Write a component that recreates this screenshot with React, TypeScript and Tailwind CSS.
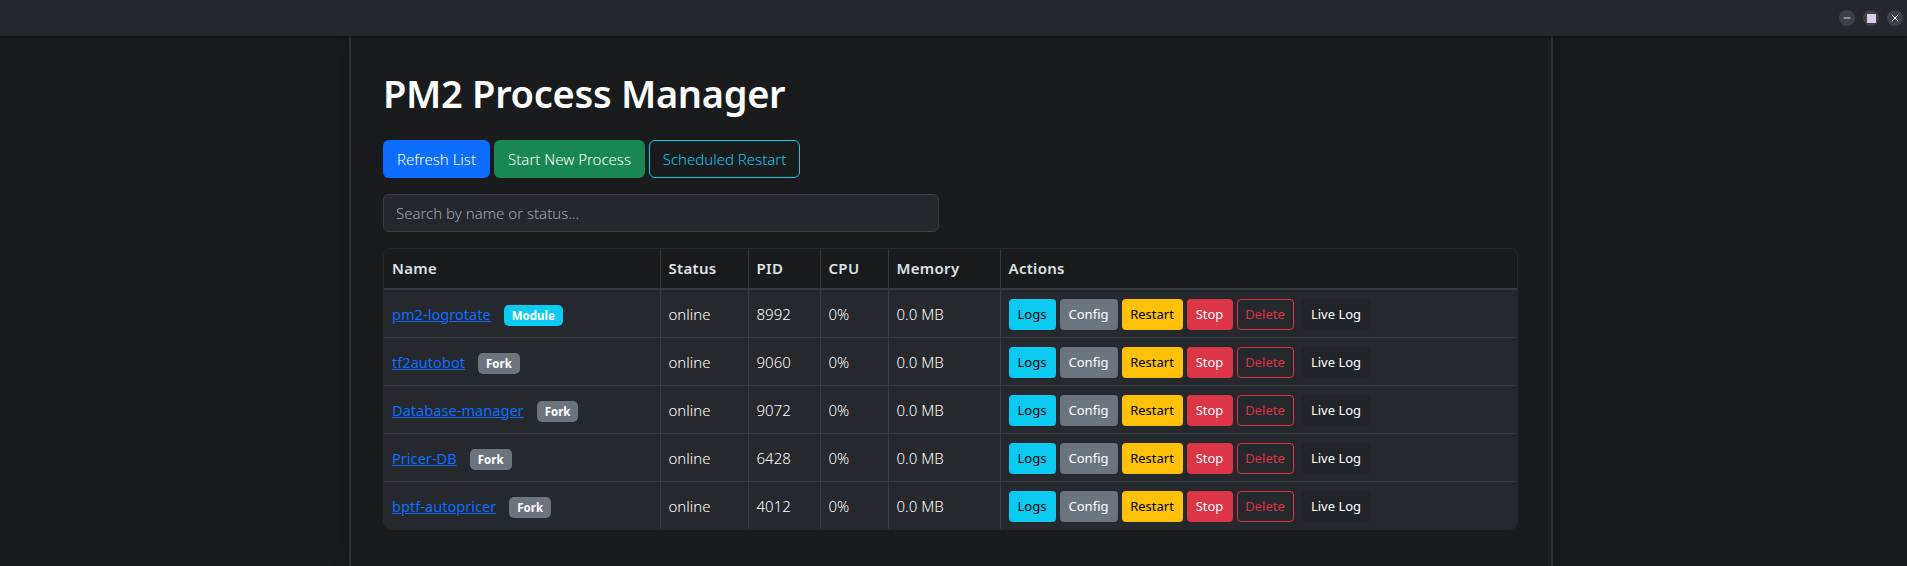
import React from "react";
import { Minus, X } from "lucide-react";

const processes = [
  { name: "pm2-logrotate", mode: "Module", pid: 8992 },
  { name: "tf2autobot", mode: "Fork", pid: 9060 },
  { name: "Database-manager", mode: "Fork", pid: 9072 },
  { name: "Pricer-DB", mode: "Fork", pid: 6428 },
  { name: "bptf-autopricer", mode: "Fork", pid: 4012 },
];

const headers = [
  { label: "Name", className: "w-[276px]" },
  { label: "Status", className: "w-[88px]" },
  { label: "PID", className: "w-[72px]" },
  { label: "CPU", className: "w-[68px]" },
  { label: "Memory", className: "w-[112px]" },
  { label: "Actions", className: "border-r-0" },
];

const smallBtn = "h-[31px] rounded text-[13px] leading-none";

const ProcessRow = ({ p, last }: { p: (typeof processes)[number]; last: boolean }) => {
  const cell = `h-[48px] border-r border-[#373b3e] px-2 pt-[2px] align-middle text-[15px] font-light text-white ${
    last ? "" : "border-b"
  }`;
  return (
    <tr className="bg-[#25282c]">
      <td className={cell}>
        <a href="#" className="text-[14.6px] font-normal text-[#0d6efd] underline">
          {p.name}
        </a>
        <span
          className={`ml-[13px] inline-block h-[21px] rounded-[5px] px-2 text-[11.5px] font-bold leading-[21px] text-white ${
            p.mode === "Module" ? "bg-[#0dcaf0]" : "bg-[#6c757d]"
          }`}
        >
          {p.mode}
        </span>
      </td>
      <td className={cell}>online</td>
      <td className={cell}>{p.pid}</td>
      <td className={cell}>0%</td>
      <td className={cell}>0.0 MB</td>
      <td className={`${cell} border-r-0`}>
        <div className="flex items-center gap-1 font-normal">
          <button className={`${smallBtn} w-[47px] bg-[#0dcaf0] text-black`}>Logs</button>
          <button className={`${smallBtn} w-[58px] bg-[#6c757d] text-white`}>Config</button>
          <button className={`${smallBtn} w-[61px] bg-[#ffc107] text-black`}>Restart</button>
          <button className={`${smallBtn} w-[46px] bg-[#dc3545] text-white`}>Stop</button>
          <button className={`${smallBtn} w-[57px] border border-[#dc3545] text-[#dc3545]`}>Delete</button>
          <button className={`${smallBtn} ml-1 w-[69px] bg-[#212529] text-white`}>Live Log</button>
        </div>
      </td>
    </tr>
  );
};

export default function App() {
  return (
    <div className="flex h-[566px] flex-col overflow-hidden bg-[#191b1d] font-['Noto_Sans','Open_Sans',sans-serif]">
      <header className="z-10 flex h-9 shrink-0 items-center justify-end gap-2 bg-[#24272c] pr-1 shadow-[0_1px_4px_rgba(0,0,0,0.4)]">
        <span className="flex h-4 w-4 items-center justify-center rounded-full bg-[#3e4043] text-white">
          <Minus size={10} strokeWidth={2} />
        </span>
        <span className="flex h-4 w-4 items-center justify-center rounded-full bg-[#3e4043]">
          <span className="h-[9px] w-[9px] bg-[#dccdf0]" />
        </span>
        <span className="flex h-4 w-4 items-center justify-center rounded-full bg-[#3e4043] text-white">
          <X size={12} strokeWidth={2} />
        </span>
      </header>
      <main className="ml-[349px] w-[1204px] flex-1 border-x-2 border-[#2c2f33] bg-[#191b1d] pl-8 pr-8 pt-[33px] shadow-[0_0_16px_rgba(0,0,0,0.25)]">
        <h1 className="text-[38px] font-semibold leading-[48px] tracking-[-0.3px] text-white">PM2 Process Manager</h1>
        <div className="mt-[23px] flex gap-1">
          <button className="h-[38px] w-[107px] rounded-md bg-[#0d6efd] text-[15px] font-light text-white">Refresh List</button>
          <button className="h-[38px] w-[151px] rounded-md bg-[#198754] text-[15px] font-light text-white">Start New Process</button>
          <button className="h-[38px] w-[151px] rounded-md border border-[#0dcaf0] text-[15px] font-light text-[#0dcaf0]">
            Scheduled Restart
          </button>
        </div>
        <input
          placeholder="Search by name or status..."
          className="mt-4 block h-[38px] w-[556px] rounded-md border border-[#3a3d41] bg-[#24272c] px-3 text-[15px] font-light text-white outline-none placeholder:text-[#a5a8ac]"
        />
        <div className="mt-4 w-[1135px] overflow-hidden rounded-lg border border-[#25282c]">
          <table className="w-full table-fixed border-collapse">
            <thead>
              <tr className="bg-[#191a1c]">
                {headers.map((h) => (
                  <th
                    key={h.label}
                    className={`h-[40px] border-b-2 border-r border-[#373b3e] px-2 text-left text-[15px] font-semibold tracking-[0.3px] text-[#dee2e6] ${h.className}`}
                  >
                    {h.label}
                  </th>
                ))}
              </tr>
            </thead>
            <tbody>
              {processes.map((p, i) => (
                <ProcessRow key={p.name} p={p} last={i === processes.length - 1} />
              ))}
            </tbody>
          </table>
        </div>
      </main>
    </div>
  );
}
